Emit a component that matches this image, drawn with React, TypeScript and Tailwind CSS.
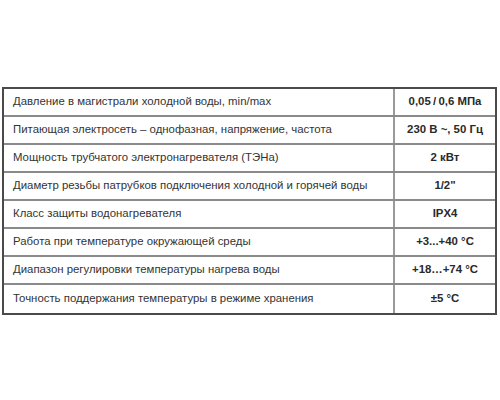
const rows: [string, string][] = [
  ["Давление в магистрали холодной воды, min/max", "0,05\u2009/\u20090,6 МПа"],
  ["Питающая электросеть – однофазная, напряжение, частота", "230 В ~, 50 Гц"],
  ["Мощность трубчатого электронагревателя (ТЭНа)", "2 кВт"],
  ["Диаметр резьбы патрубков подключения холодной и горячей воды", "1/2\""],
  ["Класс защиты водонагревателя", "IPX4"],
  ["Работа при температуре окружающей среды", "+3...+40 °C"],
  ["Диапазон регулировки температуры нагрева воды", "+18…+74 °C"],
  ["Точность поддержания температуры в режиме хранения", "±5 °C"],
];

export default function App() {
  return (
    <div className="h-[400px] w-[500px] bg-white pl-[2px] pt-[87px] font-['Liberation_Sans',Arial,sans-serif] text-[11.4px] text-[#333]">
      <div className="w-[495px] border-2 border-[#4a4a4a]">
        {rows.map(([label, value], i) => (
          <div
            key={label}
            className={`flex h-[28px] ${i < rows.length - 1 ? "border-b-2 border-[#8a8a8a]" : ""}`}
          >
            <div className="flex w-[391px] items-center border-r-2 border-[#9a9a9a] pl-[9px]">
              {label}
            </div>
            <div className="flex flex-1 items-center justify-center font-bold text-[#2a2a2a]">
              {value}
            </div>
          </div>
        ))}
      </div>
    </div>
  );
}
